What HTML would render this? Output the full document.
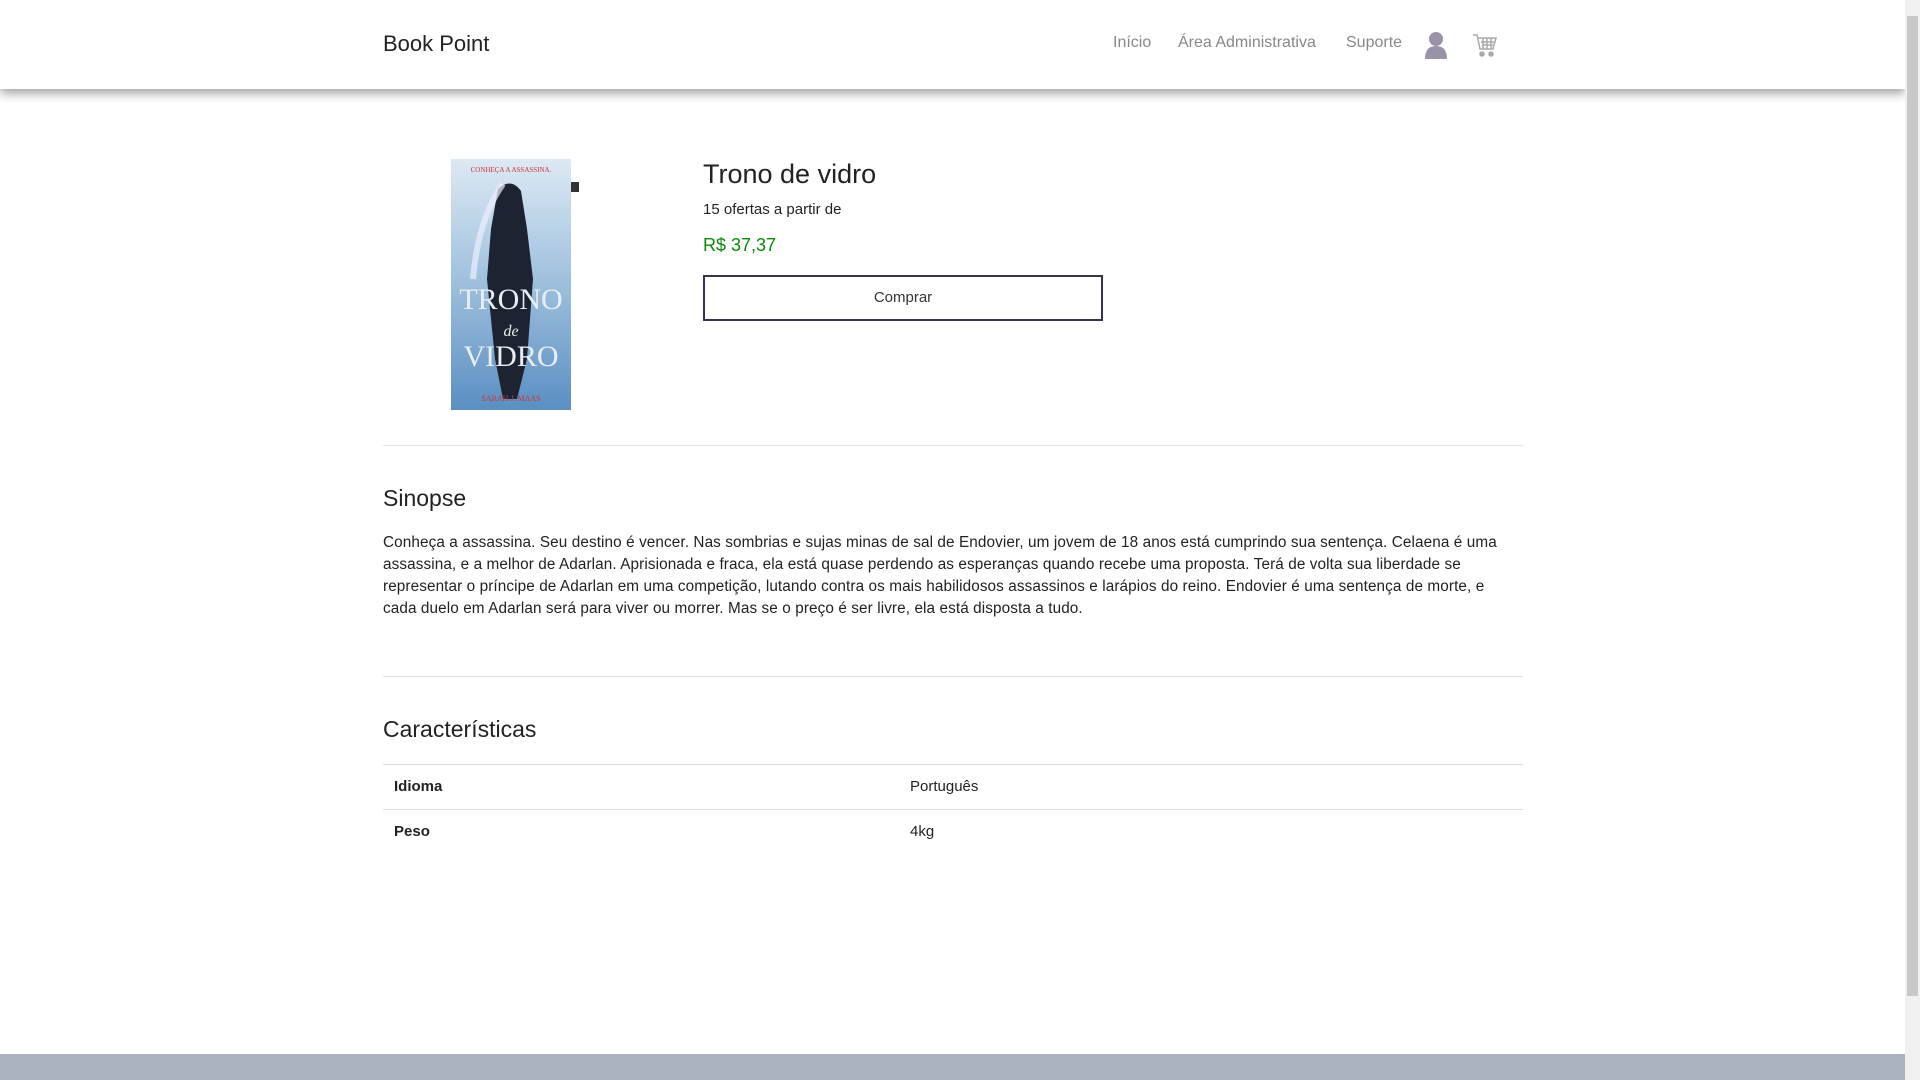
<!DOCTYPE html>
<html><head><meta charset="utf-8">
<style>
*{box-sizing:border-box;margin:0;padding:0}
body{width:1920px;height:1080px;overflow:hidden;background:#fff;font-family:"Liberation Sans",sans-serif;color:#222;position:relative}
.nav{position:absolute;left:0;top:0;width:1905px;height:89px;background:#fff;box-shadow:0 4px 10px rgba(0,0,0,.4)}
.brand{position:absolute;left:383px;top:31px;font-size:22px;color:#222}
.nl{position:absolute;top:34px;font-size:16px;color:#888}
.sb{position:absolute;right:0;top:0;width:15px;height:1080px;background:#f0f0f0}
.sb div{position:absolute;left:2px;top:16px;width:11px;height:980px;background:#c8c8c8}
.abs{position:absolute}
hr{position:absolute;left:383px;width:1140px;border:0;border-top:1px solid #e2e2e2}
p.syn{position:absolute;left:383px;top:532px;width:1130px;font-size:15.3px;line-height:22px;color:#222;letter-spacing:.1px}
.row{position:absolute;left:383px;width:1140px;height:45px;border-top:1px solid #ddd;font-size:15px}
.row b{position:absolute;left:11px;top:13px}
.row span{position:absolute;left:527px;top:13px}
</style></head><body>
<div class="nav">
<div class="brand">Book Point</div>
<div class="nl" style="left:1113px">Início</div>
<div class="nl" style="left:1178px">Área Administrativa</div>
<div class="nl" style="left:1346px">Suporte</div>
<svg class="abs" style="left:1424px;top:31px" width="24" height="28" viewBox="0 0 24 28"><circle cx="12" cy="8" r="7" fill="#9a93a8"/><path d="M1 28 Q1 15 12 15 Q23 15 23 28Z" fill="#9a93a8"/></svg>
<svg class="abs" style="left:1472px;top:33px" width="26" height="26" viewBox="0 0 26 26" fill="none" stroke="#aaa" stroke-width="1.5"><path d="M1 2h4l3 14h13l3-11H6"/><path d="M9 9h13M10 12h11M11 5v11M15 5v11M19 5v11"/><circle cx="10" cy="21" r="2" fill="#aaa"/><circle cx="19" cy="21" r="2" fill="#aaa"/></svg>
</div>
<div class="sb"><div></div></div>
<svg class="abs" style="left:443px;top:159px" width="136" height="251" viewBox="0 0 136 251">
<defs><linearGradient id="g" x1="0" y1="0" x2="0" y2="1"><stop offset="0" stop-color="#dde9f4"/><stop offset=".5" stop-color="#9dbfdc"/><stop offset="1" stop-color="#5a8fc2"/></linearGradient></defs>
<rect x="8" width="120" height="251" fill="url(#g)"/>
<path d="M55 30 Q68 18 78 32 L84 70 L90 120 L84 200 L74 240 L60 240 L52 200 L44 120 L48 70Z" fill="#1d2330"/>
<path d="M60 25 Q35 60 30 120" stroke="#eef" stroke-width="6" fill="none" opacity=".7"/>
<text x="68" y="13" font-size="7" fill="#c33" text-anchor="middle" font-family="Liberation Serif">CONHEÇA A ASSASSINA.</text>
<text x="68" y="150" font-size="30" fill="#e9eef3" text-anchor="middle" font-family="Liberation Serif">TRONO</text>
<text x="68" y="177" font-size="16" fill="#e9eef3" text-anchor="middle" font-style="italic" font-family="Liberation Serif">de</text>
<text x="68" y="207" font-size="30" fill="#e9eef3" text-anchor="middle" font-family="Liberation Serif">VIDRO</text>
<text x="68" y="242" font-size="8" fill="#c33" text-anchor="middle" font-family="Liberation Serif">SARAH J. MAAS</text>
<rect x="128" y="23" width="8" height="10" fill="#333"/>
</svg>
<div class="abs" style="left:703px;top:159px;font-size:27px;color:#222">Trono de vidro</div>
<div class="abs" style="left:703px;top:201px;font-size:15px">15 ofertas a partir de</div>
<div class="abs" style="left:703px;top:235px;font-size:18px;color:#0a8a0a">R$ 37,37</div>
<div class="abs" style="left:703px;top:275px;width:400px;height:46px;border:2px solid #3a3050;text-align:center;line-height:42px;font-size:15px;color:#333">Comprar</div>
<hr style="top:445px">
<div class="abs" style="left:383px;top:485px;font-size:23px">Sinopse</div>
<p class="syn">Conheça a assassina. Seu destino é vencer. Nas sombrias e sujas minas de sal de Endovier, um jovem de 18 anos está cumprindo sua sentença. Celaena é uma assassina, e a melhor de Adarlan. Aprisionada e fraca, ela está quase perdendo as esperanças quando recebe uma proposta. Terá de volta sua liberdade se representar o príncipe de Adarlan em uma competição, lutando contra os mais habilidosos assassinos e larápios do reino. Endovier é uma sentença de morte, e cada duelo em Adarlan será para viver ou morrer. Mas se o preço é ser livre, ela está disposta a tudo.</p>
<hr style="top:676px">
<div class="abs" style="left:383px;top:716px;font-size:23px">Características</div>
<div class="row" style="top:764px"><b>Idioma</b><span>Português</span></div>
<div class="row" style="top:809px"><b>Peso</b><span>4kg</span></div>
<div class="abs" style="left:0;top:1054px;width:1905px;height:26px;background:#a9b3be"></div>
</body></html>
